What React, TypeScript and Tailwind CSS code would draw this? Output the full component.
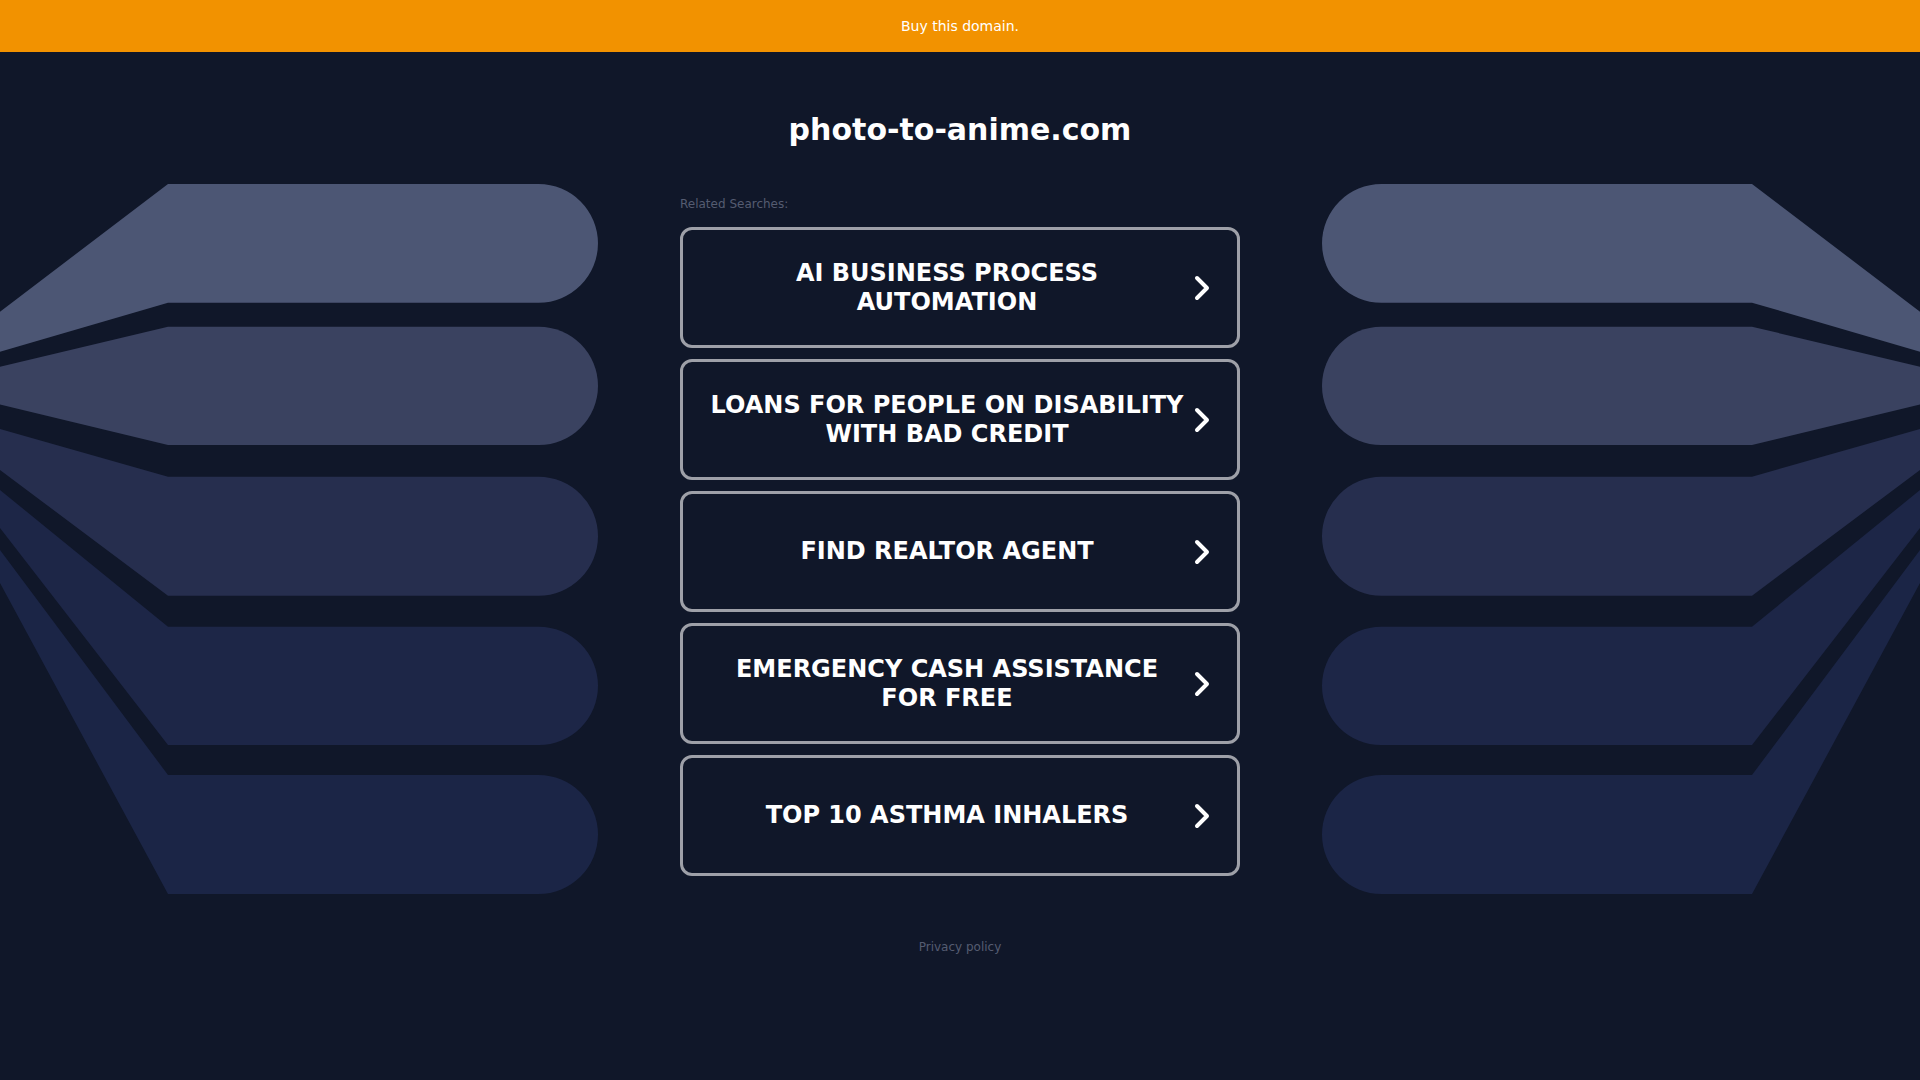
import React from 'react';

const searches = [
  'AI BUSINESS PROCESS AUTOMATION',
  'LOANS FOR PEOPLE ON DISABILITY WITH BAD CREDIT',
  'FIND REALTOR AGENT',
  'EMERGENCY CASH ASSISTANCE FOR FREE',
  'TOP 10 ASTHMA INHALERS',
];

// each band: flat top/bottom at x=168, tail runs to the left edge
const bands = [
  { top: 0, bottom: 118.7, tailTop: 127.7, tailBottom: 167.7, fill: '#4c5674' },
  { top: 142.7, bottom: 261, tailTop: 182.7, tailBottom: 220.5, fill: '#3a4260' },
  { top: 292.7, bottom: 411.7, tailTop: 245, tailBottom: 286, fill: '#262e4e' },
  { top: 442.7, bottom: 561, tailTop: 306, tailBottom: 344, fill: '#1d2647' },
  { top: 591, bottom: 710, tailTop: 366, tailBottom: 399, fill: '#1b2546' },
];

const Fan = ({ flip }: { flip?: boolean }) => (
  <svg
    width="598"
    height="710"
    viewBox="0 0 598 710"
    className={flip ? '-scale-x-100 shrink-0' : 'shrink-0'}
  >
    {bands.map((b, i) => {
      const r = (b.bottom - b.top) / 2;
      const d = `M168 ${b.top} L${598 - r} ${b.top} A${r} ${r} 0 0 1 ${598 - r} ${b.bottom} L168 ${b.bottom} L0 ${b.tailBottom} L0 ${b.tailTop} Z`;
      return <path key={i} d={d} fill={b.fill} />;
    })}
  </svg>
);

const Chevron = () => (
  <svg width="16" height="26" viewBox="0 0 16 26" className="shrink-0">
    <polyline
      points="3,3 13,13 3,23"
      fill="none"
      stroke="#ffffff"
      strokeWidth="4"
      strokeLinecap="round"
      strokeLinejoin="round"
    />
  </svg>
);

export default function App() {
  return (
    <div className="min-h-screen bg-[#101729] font-['DejaVu_Sans',sans-serif]">
      <div className="h-[52px] bg-[#f29200] flex items-center justify-center text-[14px] leading-5 text-white">
        Buy this domain.
      </div>

      <h1 className="mt-[60px] text-center text-[30px] leading-9 font-bold text-white">
        photo-to-anime.com
      </h1>

      <div className="mt-9 flex justify-between items-start overflow-hidden">
        <Fan />

        <div className="w-[560px] pt-[12px] shrink-0">
          <p className="text-[12px] leading-4 text-[#555c71]">Related Searches:</p>
          <div className="mt-[15px] flex flex-col gap-[11px]">
            {searches.map((s) => (
              <a
                key={s}
                href="#"
                className="h-[121px] flex items-center gap-2 pl-[25px] pr-[27px] border-[3px] border-[#9ea0a8] rounded-[12px] text-white"
              >
                <span className="flex-1 text-center text-[24px] leading-[1.2] font-bold">{s}</span>
                <Chevron />
              </a>
            ))}
          </div>
          <p className="mt-[63px] text-center text-[12px] leading-4 text-[#555c71]">Privacy policy</p>
        </div>

        <Fan flip />
      </div>
    </div>
  );
}
